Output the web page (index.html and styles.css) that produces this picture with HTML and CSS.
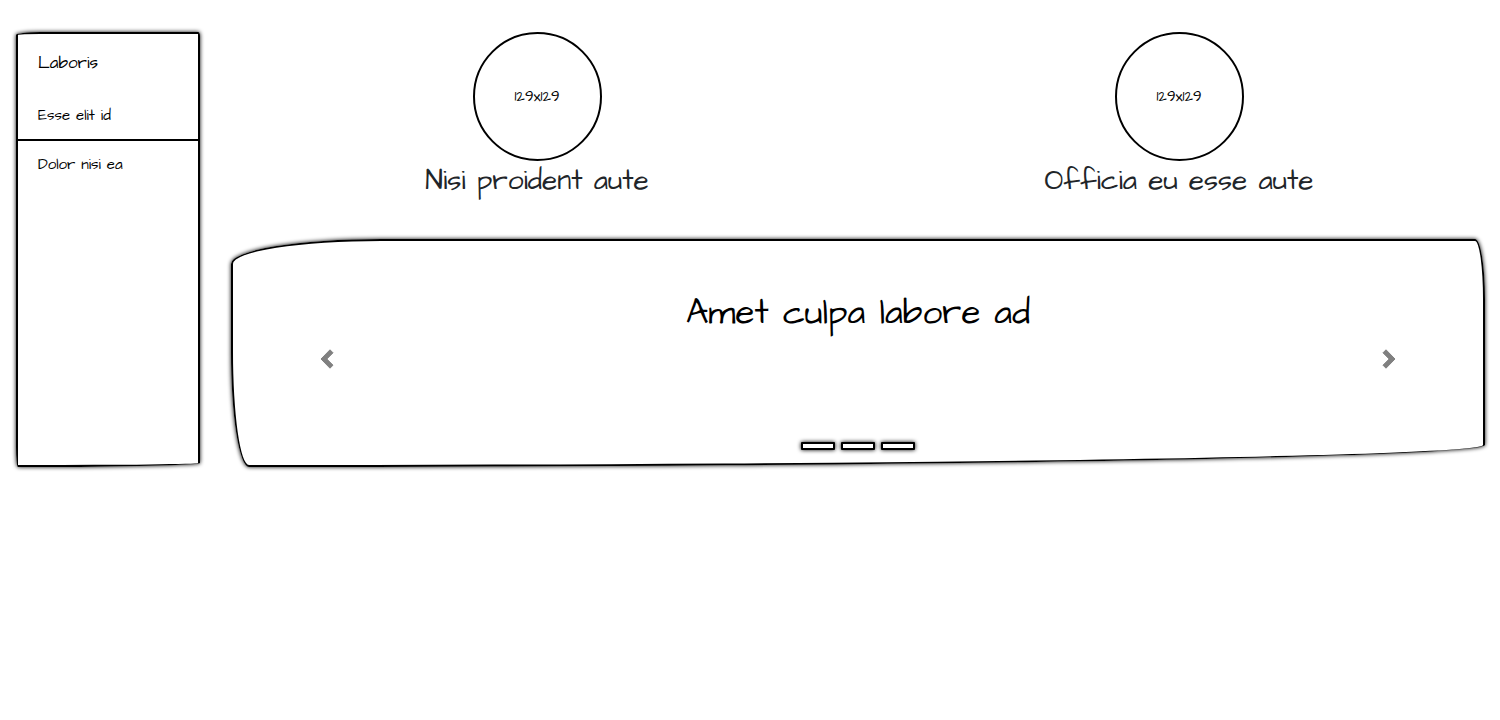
FILE: index.html
```html
<!DOCTYPE html>
<html lang="en">
<head>
<meta charset="utf-8">
<meta name="viewport" content="width=device-width, initial-scale=1">
<title>Laboris</title>
<link rel="stylesheet" href="styles.css">
</head>
<body>
<div class="layout">
  <nav class="sidebar">
    <h2 class="sidebar-title">Laboris</h2>
    <a class="sidebar-link" href="#">Esse elit id</a>
    <a class="sidebar-link" href="#">Dolor nisi ea</a>
  </nav>
  <main class="main">
    <div class="profiles">
      <section class="profile">
        <div class="avatar">129x129</div>
        <h3 class="profile-name">Nisi proident aute</h3>
      </section>
      <section class="profile">
        <div class="avatar">129x129</div>
        <h3 class="profile-name">Officia eu esse aute</h3>
      </section>
    </div>
    <section class="carousel">
      <button class="arrow" type="button" aria-label="Previous">
        <svg width="20" height="20" viewBox="0 0 20 20" fill="#808080" stroke="#808080" stroke-width="1" stroke-linejoin="round"><path d="M13 .8L4 10l9 9.200 3-3L9.800 10 16 3.800z"/></svg>
      </button>
      <div class="slide">
        <h1 class="slide-title">Amet culpa labore ad</h1>
        <div class="indicators">
          <button class="indicator" type="button" aria-label="Slide 1"></button>
          <button class="indicator" type="button" aria-label="Slide 2"></button>
          <button class="indicator" type="button" aria-label="Slide 3"></button>
        </div>
      </div>
      <button class="arrow" type="button" aria-label="Next">
        <svg width="20" height="20" viewBox="0 0 20 20" fill="#808080" stroke="#808080" stroke-width="1" stroke-linejoin="round"><path d="M7 .8L16 10l-9 9.200-3-3L10.200 10 4 3.800z"/></svg>
      </button>
    </section>
  </main>
</div>
</body>
</html>
```
FILE: styles.css
```css
* {
  box-sizing: border-box;
}

body {
  margin: 0;
  background: #fff;
  color: #000;
  font-family: "Architects Daughter", "Comic Neue", "Lato", sans-serif;
  font-size: 15px;
  line-height: 24px;
}

h1, h2, h3 {
  margin: 0;
  font-weight: 400;
}

button {
  padding: 0;
  background: #fff;
  cursor: pointer;
}

.layout {
  display: flex;
  gap: 31px;
  padding: 32px 15px 32px 16px;
}

.sidebar {
  flex: 0 0 184px;
  border: 2px solid #000;
  border-radius: 24px 2px 170px 2px / 3px 4px 4px 20px;
  box-shadow: 0 0 4px #000;
}

.sidebar-title {
  padding: 16px 20px;
  font-size: 17px;
  line-height: 26px;
}

.sidebar-link {
  display: block;
  padding: 12px 20px 11px;
  color: #000;
  text-decoration: none;
}

.sidebar-link + .sidebar-link {
  border-top: 2px solid #000;
}

.main {
  flex: 1;
  min-width: 0;
  display: grid;
  gap: 39px;
}

.profiles {
  display: grid;
  grid-template-columns: 1fr 1fr;
  gap: 30px;
}

.profile {
  display: flex;
  flex-direction: column;
  align-items: center;
}

.avatar {
  display: flex;
  align-items: center;
  justify-content: center;
  width: 129px;
  height: 129px;
  border: 2px solid #000;
  border-radius: 50%;
}

.profile-name {
  color: #212529;
  font-size: 28px;
  line-height: 39px;
  text-align: center;
}

.carousel {
  display: flex;
  min-height: 228px;
  border: 2px solid #000;
  border-radius: 150px 10px 1230px 18px / 25px 60px 22px 115px;
  box-shadow: 0 0 4px #000;
}

.arrow {
  display: flex;
  flex: 0 0 15%;
  align-items: center;
  justify-content: center;
  padding-top: 12px;
  border: 0;
  background: transparent;
}

.slide {
  display: flex;
  flex: 1;
  flex-direction: column;
  justify-content: space-between;
  padding: 48px 0 15px;
}

.slide-title {
  font-size: 35px;
  line-height: 48px;
  text-align: center;
}

.indicators {
  display: flex;
  justify-content: center;
  gap: 6px;
}

.indicator {
  width: 34px;
  height: 8px;
  border: 2px solid #000;
  border-radius: 1px;
  box-shadow: 0 0 4px #000;
}
```
